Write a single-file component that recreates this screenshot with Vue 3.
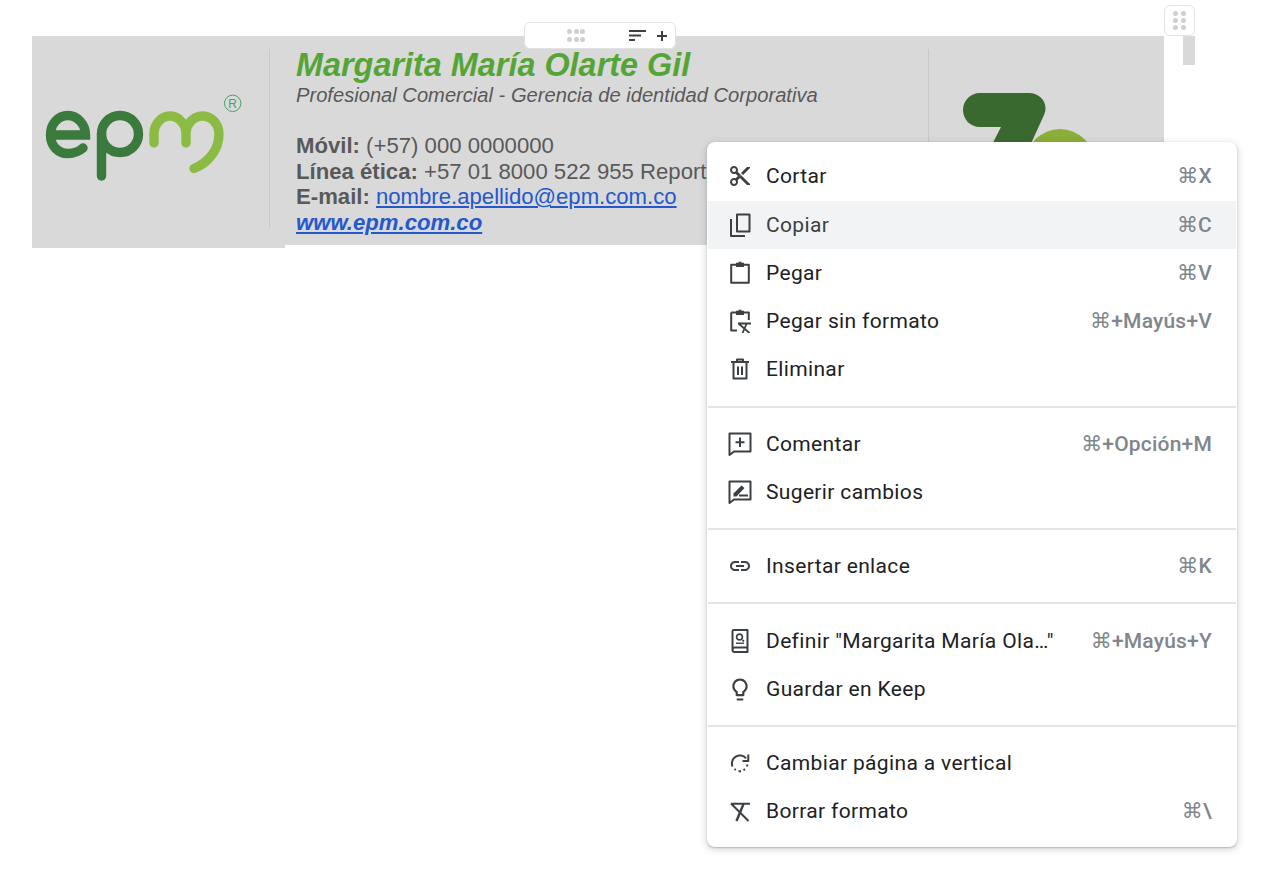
<script setup>
const tab = 'M8 3V1.8H10.5V.8H13.5V1.8H16V6H8Z'
const icons = {
  cut: [{ f: 'M9.64 7.64c.23-.5.36-1.05.36-1.64 0-2.21-1.79-4-4-4S2 3.79 2 6s1.79 4 4 4c.59 0 1.14-.13 1.64-.36L10 12l-2.36 2.36C7.14 14.13 6.59 14 6 14c-2.21 0-4 1.79-4 4s1.79 4 4 4 4-1.79 4-4c0-.59-.13-1.14-.36-1.64L12 14l7 7h3v-1L9.64 7.64zM6 8c-1.1 0-2-.89-2-2s.9-2 2-2 2 .89 2 2-.9 2-2 2zm0 12c-1.1 0-2-.89-2-2s.9-2 2-2 2 .89 2 2-.9 2-2 2zm6-7.5c-.28 0-.5-.22-.5-.5s.22-.5.5-.5.5.22.5.5-.22.5-.5.5zM19 3l-6 6 2 2 7-7V3h-3z' }],
  copy: [{ s: 'M9 1.5H21.5V18.5H9Z' }, { s: 'M3 6V23H17' }],
  paste: [{ s: 'M3.2 3.8H20.8V21.8H3.2Z' }, { f: tab }],
  pasteplain: [{ s: 'M3.2 3.5H20.8V11M3.2 3.5V21.5H9' }, { f: tab }, { s: 'M10 14.5H23M10.5 14.5L21.5 24M18.5 15L14.5 24', w: 1.8 }],
  trash: [{ s: 'M5.5 6V21.5H18.5V6M3 5H21M9 4V2.5H15V4', w: 2 }, { s: 'M10 9.5V18M14 9.5V18', w: 2 }],
  comment: [{ s: 'M1.5 1.5H22.5V19.5H6L1.5 23Z' }, { s: 'M12 5.5V15M7.5 10.2H16.5' }],
  suggest: [{ s: 'M1.5 1.5H22.5V19.5H6L1.5 23Z' }, { f: 'M5.5 16.5V13.5L13.5 5.5L16.5 8L8.5 16.5Z' }, { s: 'M11 15.5H20' }],
  link: [{ f: 'M3.9 12c0-1.71 1.39-3.1 3.1-3.1h4V7H7c-2.76 0-5 2.24-5 5s2.24 5 5 5h4v-1.9H7c-1.71 0-3.1-1.39-3.1-3.1zM8 13h8v-2H8v2zm9-6h-4v1.9h4c1.71 0 3.1 1.39 3.1 3.1s-1.39 3.1-3.1 3.1h-4V17h4c2.76 0 5-2.24 5-5s-2.24-5-5-5z' }],
  book: [{ s: 'M4.5 20V2.2C4.5 1.5 5 1 5.7 1H19.5V23H6.8C5.5 23 4.5 22 4.5 20.7C4.5 19.5 5.5 18.5 6.8 18.5H19.5' }, { s: 'M14.4 10.9L16 12.5M14.4 8A2.9 2.9 0 1 1 8.6 8A2.9 2.9 0 1 1 14.4 8Z', w: 1.7 }, { s: 'M8 14.2H16', w: 1.4 }],
  bulb: [{ t: 'translate(-1.2 -.6) scale(1.1)', f: 'M9 21c0 .55.45 1 1 1h4c.55 0 1-.45 1-1v-1H9v1zm3-19C8.14 2 5 5.14 5 9c0 2.38 1.19 4.47 3 5.74V17c0 .55.45 1 1 1h6c.55 0 1-.45 1-1v-2.26c1.81-1.27 3-3.36 3-5.74 0-3.86-3.14-7-7-7zm2.85 11.1l-.85.6V16h-4v-2.3l-.85-.6C7.8 12.16 7 10.63 7 9c0-2.76 2.24-5 5-5s5 2.24 5 5c0 1.63-.8 3.16-2.15 4.1z' }],
  rotate: [{ s: 'M18 7.3A8 8 0 0 0 4.5 15.5' }, { s: 'M6.5 18L7.8 19M10.5 20.2H13M15.5 19.2L17 18M18.8 15.5L19.6 13.5', w: 2 }, { s: 'M20.3 3.5V10H14.5', w: 2 }],
  clear: [{ s: 'M3 4.8H22M3 4.5L20.5 22', w: 2 }, { s: 'M15.5 5L8.5 22', w: 2.4 }],
}

const groups = [
  [
    { icon: 'cut', label: 'Cortar', key: '⌘X' },
    { icon: 'copy', label: 'Copiar', key: '⌘C', active: true },
    { icon: 'paste', label: 'Pegar', key: '⌘V' },
    { icon: 'pasteplain', label: 'Pegar sin formato', key: '⌘+Mayús+V' },
    { icon: 'trash', label: 'Eliminar' },
  ],
  [
    { icon: 'comment', label: 'Comentar', key: '⌘+Opción+M' },
    { icon: 'suggest', label: 'Sugerir cambios' },
  ],
  [{ icon: 'link', label: 'Insertar enlace', key: '⌘K' }],
  [
    { icon: 'book', label: 'Definir "Margarita María Ola…"', key: '⌘+Mayús+Y' },
    { icon: 'bulb', label: 'Guardar en Keep' },
  ],
  [
    { icon: 'rotate', label: 'Cambiar página a vertical' },
    { icon: 'clear', label: 'Borrar formato', key: '⌘\\' },
  ],
]
</script>

<template>
  <div class="page">
    <div class="table-row">
      <section class="card">
        <div class="logo-cell">
          <svg class="epm" width="236" height="180" viewBox="32 49 236 180" aria-label="epm">
            <path class="dark" d="M51 135H85.5C85.5 124 77 115.5 68 115.5C58 115.5 50.5 124 50.5 135C50.5 146 58 153.5 68 153.5C74 153.5 79 151.5 83 148" />
            <circle class="dark" cx="120" cy="134" r="18.5" />
            <path class="dark" d="M101.5 134V176" />
            <path class="light" d="M154 143V134A16 18 0 0 1 186 134V143M186 134A16.5 18 0 0 1 219 134C219 150 208 163 194 168.5" />
            <circle class="reg" cx="232.7" cy="103.3" r="8.2" />
            <text class="reg-t" x="232.7" y="107.5" text-anchor="middle">R</text>
          </svg>
        </div>
        <div class="text-cell">
          <h1 class="name">Margarita María Olarte Gil</h1>
          <p class="role">Profesional Comercial - Gerencia de identidad Corporativa</p>
          <p class="line gap"><b>Móvil:</b> (+57) 000 0000000</p>
          <p class="line"><b>Línea ética:</b> +57 01 8000 522 955 Report</p>
          <p class="line"><b>E-mail:</b> <a href="#">nombre.apellido@epm.com.co</a></p>
          <p class="line"><a class="web" href="#">www.epm.com.co</a></p>
        </div>
        <div class="mark-cell">
          <svg class="mark" width="170" height="70" viewBox="0 0 170 70">
            <path d="M51 13H100C112 13 120 24 115 35L90 90H50L72 47H51C41 47 34 39 34 30C34 21 41 13 51 13Z" fill="#3a692f" />
            <circle cx="131" cy="83.5" r="34.5" fill="#8aae38" />
          </svg>
        </div>
        <div class="col-handle">
          <span class="toolbar">
            <span class="dots dots-h"><i v-for="n in 6" :key="n"></i></span>
            <svg class="sort" width="17" height="12" viewBox="0 0 17 12">
              <path d="M0 1H17M0 5.5H12M0 10H6" />
            </svg>
            <svg class="plus" width="12" height="12" viewBox="0 0 12 12">
              <path d="M6 1V11M1 6H11" />
            </svg>
          </span>
        </div>
      </section>
      <div class="row-side">
        <span class="row-handle"><span class="dots dots-v"><i v-for="n in 6" :key="n"></i></span></span>
        <span class="row-bar"></span>
      </div>
    </div>

    <nav class="menu">
      <div v-for="(group, g) in groups" :key="g" class="group">
        <div v-for="item in group" :key="item.label" class="item" :class="{ active: item.active }">
          <svg class="icon" width="24" height="24" viewBox="0 0 24 24">
            <template v-for="(p, i) in icons[item.icon]" :key="i">
              <path v-if="p.f" :d="p.f" :transform="p.t" class="ifill" />
              <path v-else :d="p.s" class="istroke" :stroke-width="p.w || 2" />
            </template>
          </svg>
          <span class="label">{{ item.label }}</span>
          <span v-if="item.key" class="key">{{ item.key }}</span>
        </div>
      </div>
    </nav>
  </div>
</template>

<style>
html, body { margin: 0; background: #fff; }
</style>

<style scoped>
.page {
  position: relative;
  width: 1280px;
  height: 889px;
  overflow: hidden;
  background: #fff;
  padding: 36px 0 0 32px;
  box-sizing: border-box;
}
.table-row { display: flex; align-items: flex-start; }
.card {
  position: relative;
  display: flex;
  width: 1132px;
  height: 209px;
  padding-top: 13px;
  box-sizing: border-box;
  background: #d9d9d9;
}
.card::after {
  content: "";
  position: absolute;
  left: 0;
  top: 100%;
  width: 253px;
  height: 3px;
  background: #d9d9d9;
}
.logo-cell {
  width: 238px;
  height: 180px;
  box-sizing: border-box;
  border-right: 1px solid #c8c8c8;
}
.epm { display: block; fill: none; }
.epm .dark, .epm .light { fill: none; stroke-width: 9.4; stroke-linecap: round; }
.epm .dark { stroke: #3a7a3c; }
.epm .light { stroke: #8cbb44; }
.reg { fill: none; stroke: #4f9e6a; stroke-width: 1; }
.reg-t { font: 12px "Liberation Sans", sans-serif; fill: #4f9e6a; }
.text-cell {
  width: 658px;
  box-sizing: border-box;
  padding-left: 26px;
  margin-top: -1px;
  font-family: "Liberation Sans", Arial, sans-serif;
  color: #595959;
  white-space: nowrap;
  overflow: hidden;
}
.name {
  margin: 0;
  font-size: 32.4px;
  line-height: 34px;
  font-style: italic;
  font-weight: 700;
  color: #55a536;
}
.role { margin: 0; font-size: 20.15px; line-height: 27px; font-style: italic; }
.line { margin: 0; font-size: 22.15px; line-height: 25.5px; }
.gap { margin-top: 24px; }
a { color: #2458cc; }
.web { font-weight: 700; font-style: italic; }
.mark-cell {
  flex: 1;
  height: 180px;
  border-left: 1px solid #c8c8c8;
  position: relative;
}
.mark { display: block; position: absolute; left: 0; top: 31px; }
.col-handle { position: absolute; left: 492px; top: -14px; }
.toolbar {
  display: flex;
  align-items: center;
  width: 152px;
  height: 27px;
  box-sizing: border-box;
  background: #fff;
  border: 1px solid #e2e2e2;
  border-radius: 6px;
  padding-left: 42px;
}
.dots { display: grid; }
.dots i { width: 5px; height: 5px; border-radius: 50%; background: #cfcfcf; display: block; }
.dots-h { grid-template-columns: repeat(3, 5px); gap: 3px 1.6px; }
.dots-v { grid-template-columns: repeat(2, 5px); gap: 2px 3px; }
.sort { margin-left: 44px; }
.sort path, .plus path { fill: none; stroke: #3c4043; stroke-width: 2; }
.plus { margin-left: 10px; }
.row-side { display: flex; flex-direction: column; align-items: flex-end; width: 31px; }
.row-handle {
  display: flex;
  justify-content: center;
  align-items: center;
  width: 31px;
  height: 31px;
  margin-top: -31px;
  box-sizing: border-box;
  background: #fff;
  border: 1px solid #e2e2e2;
  border-radius: 6px;
}
.row-bar { width: 12px; height: 29px; background: #d9d9d9; }

.menu {
  position: absolute;
  left: 707px;
  top: 142px;
  width: 530px;
  height: 705px;
  box-sizing: border-box;
  padding: 10.4px 1px 0;
  background: #fff;
  border-radius: 8px;
  box-shadow: 0 2px 6px 2px rgba(60, 64, 67, .15), 0 1px 2px rgba(60, 64, 67, .3);
  font-family: Roboto, "DejaVu Sans", sans-serif;
}
.group { padding-bottom: 12.2px; border-bottom: 2px solid #e3e3e3; margin-bottom: 12px; }
.group:last-child { border-bottom: 0; margin-bottom: 0; padding-bottom: 0; }
.item {
  display: flex;
  align-items: center;
  height: 48.2px;
  padding: 0 24px 0 20px;
}
.item.active { background: #f1f3f4; }
.item.active .label { color: #3c4043; }
.icon { flex: none; margin-right: 14px; stroke-linejoin: round; }
.ifill { fill: #3c4043; }
.istroke { fill: none; stroke: #3c4043; }
.label { flex: 1; font-size: 21px; color: #202124; letter-spacing: .35px; white-space: nowrap; }
.key { font-size: 21px; font-weight: 500; color: #80868b; letter-spacing: .2px; white-space: nowrap; }
</style>
